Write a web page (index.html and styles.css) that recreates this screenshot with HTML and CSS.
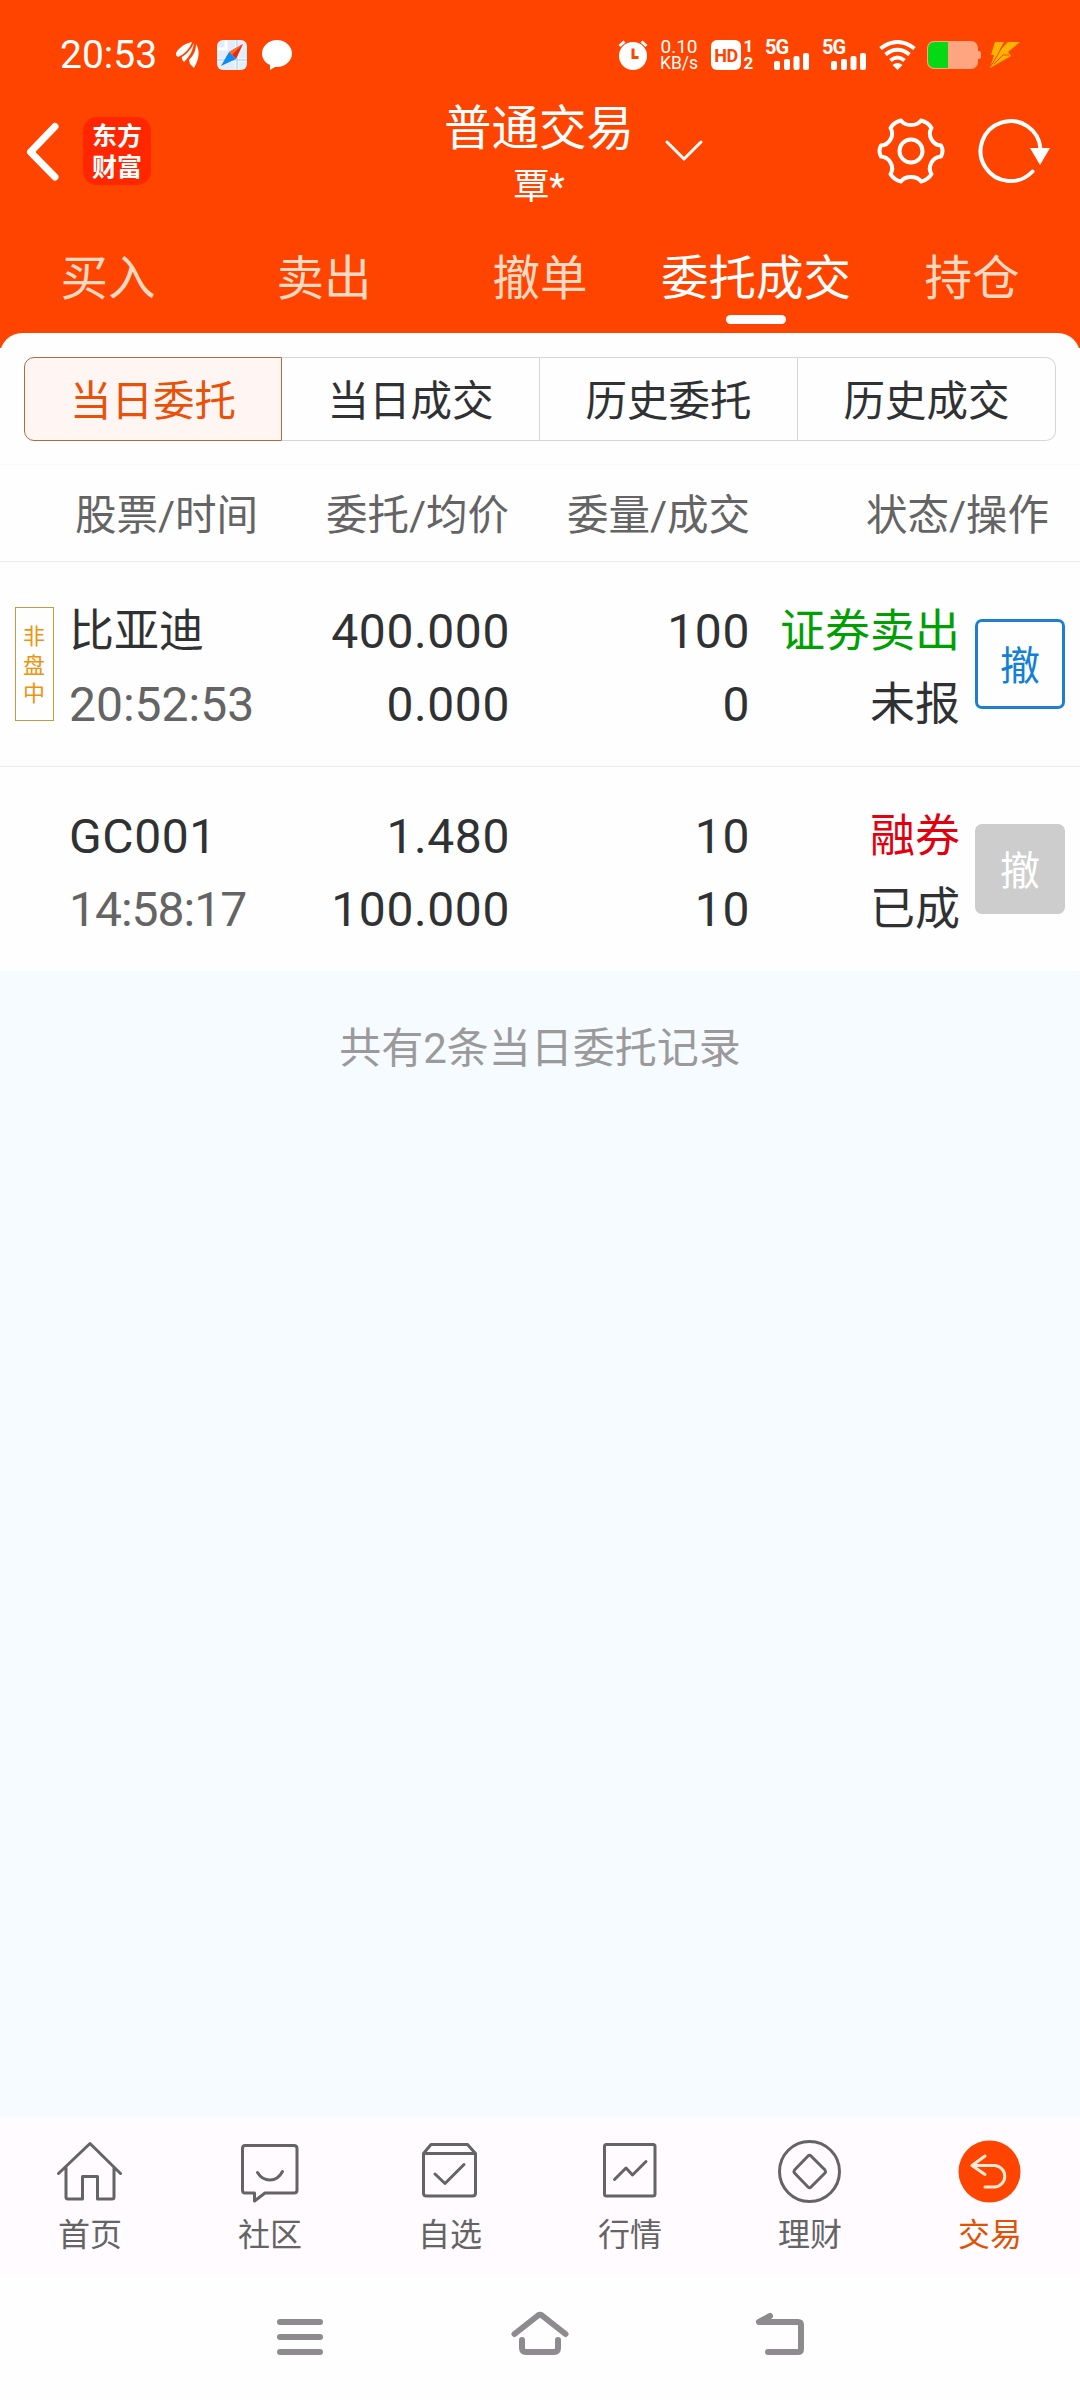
FILE: index.html
```html
<!DOCTYPE html>
<html lang="zh-CN">

<head>
    <meta charset="UTF-8">
    <meta name="viewport" content="width=device-width, initial-scale=1.0">
    <title>委托成交</title>
    <link rel="stylesheet" href="styles.css">
</head>

<body>
    <div class="header">
        <!-- 状态栏 -->
        <div class="status">
            <span class="time">20:53</span>
            <svg class="s-leaf" width="24" height="26" viewBox="0 0 24 26">
                <path d="M0 11C4 4 11 1 16 0C14 6 9 12 2 15Q-1 13 0 11Z" />
                <path d="M18 1C17 8 14 14 8 20Q5 17 6 15C12 11 15 7 18 1Z" />
                <path d="M20 2C25 10 22 19 18 26L14 22L13 18C18 13 20 8 20 2Z" />
            </svg>
            <svg class="s-compass" width="30" height="30" viewBox="0 0 30 30">
                <rect width="30" height="30" rx="6" fill="#e2ecfa" />
                <path d="M9 0V9H0M20 0V30M0 20H30" fill="none" stroke="#fff" stroke-width="3" />
                <path d="M20 0V30M0 20H30" fill="none" stroke="#b4d6f5" stroke-width="1.500" />
                <path d="M26 4L19 19L12 12Z" fill="#e8290b" />
                <path d="M26 4L12 12L15 15Z" fill="#ff6a35" />
                <path d="M4 26L12 12L19 19Z" fill="#0d8bf2" />
            </svg>
            <svg class="s-bubble" width="30" height="30" viewBox="0 0 30 30">
                <path d="M15 0C23 0 30 6 30 13.500S23 27 15 27L13 27L8 30V25C3 23 0 18 0 13.500C0 6 7 0 15 0Z" />
            </svg>

            <svg class="s-alarm" width="30" height="30" viewBox="0 0 30 30">
                <circle cx="15" cy="16" r="14" />
                <path d="M1.500 6L6.500 1.500M28.500 6L23.500 1.500" stroke="#fff" stroke-width="3" />
                <path d="M15 8.500V17.500H20.500" fill="none" stroke="#ff4400" stroke-width="3" />
            </svg>
            <div class="speed"><span>0.10</span><span>KB/s</span></div>
            <div class="hd">HD</div>
            <div class="sim"><span>1</span><span>2</span></div>
            <div class="signal">
                <span>5G</span>
                <svg width="36" height="18" viewBox="0 0 36 18">
                    <rect x="0" y="9" width="6" height="9" rx="2" />
                    <rect x="10" y="7" width="6" height="11" rx="2" />
                    <rect x="19.500" y="4" width="6" height="14" rx="2" />
                    <rect x="29" y="1" width="6" height="17" rx="2" />
                </svg>
            </div>
            <div class="signal">
                <span>5G</span>
                <svg width="36" height="18" viewBox="0 0 36 18">
                    <rect x="0" y="9" width="6" height="9" rx="2" />
                    <rect x="10" y="7" width="6" height="11" rx="2" />
                    <rect x="19.500" y="4" width="6" height="14" rx="2" />
                    <rect x="29" y="1" width="6" height="17" rx="2" />
                </svg>
            </div>
            <svg class="s-wifi" width="37" height="30" viewBox="0 0 37 30">
                <path d="M1.500 8.500Q18.500 -4.500 35.500 8.500M6.500 14.500Q18.500 5 30.500 14.500M11.500 20.500Q18.500 14.500 25.500 20.500" fill="none" stroke="#fff" stroke-width="4" />
                <path d="M13.500 25Q18.500 21 23.500 25L18.500 30Z" />
            </svg>
            <svg class="s-battery" width="54" height="28" viewBox="0 0 54 28">
                <path d="M50 10H52Q54 10 54 12V16Q54 18 52 18H50Z" fill="#ffa57f" />
                <rect width="51" height="28" rx="7" fill="#ffa57f" />
                <path d="M21 1V27H8Q1 27 1 20V8Q1 1 8 1Z" fill="#05d815" />
            </svg>
            <svg class="s-bolt" width="30" height="26" viewBox="0 0 30 26">
                <path d="M5 0H14L9 9L18 0H30L18 10L21 14L0 26L4 13H1Z" fill="#ffb400" />
                <path d="M15 0L7 14L1 24M19 13H13L4 22" fill="none" stroke="#ff4400" stroke-width="1" />
            </svg>
        </div>

        <!-- 标题栏 -->
        <div class="bar">
            <div class="bar-left">
                <svg class="back" width="36" height="60" viewBox="0 0 36 60">
                    <path d="M30 5.500L5.500 31L30 56" fill="none" stroke="#fff" stroke-width="7" stroke-linecap="round" stroke-linejoin="round" />
                </svg>
                <div class="logo"><span>东方</span><span>财富</span></div>
            </div>
            <div class="title">
                <h1>普通交易</h1>
                <p>覃*</p>
            </div>
            <div class="bar-right">
                <svg class="down" width="38" height="22" viewBox="0 0 38 22">
                    <path d="M2 2L19 19L36 2" fill="none" stroke="#fff" stroke-width="3" stroke-linecap="round" />
                </svg>
                <svg class="gear" width="72" height="72" viewBox="0 0 72 72">
                    <path d="M26 5.500C30 11.500 42 11.500 46 5.500Q53 7 56.500 13C52 20 57.500 30 66 30.500Q69 36 66 41.500C57.500 42 52 52 56.500 59Q53 65 46 66.500C42 60.500 30 60.500 26 66.500Q19 65 15.500 59C20 52 14.500 42 6 41.500Q3 36 6 30.500C14.500 30 20 20 15.500 13Q19 7 26 5.500Z" fill="none" stroke="#fff" stroke-width="4" stroke-linejoin="round" />
                    <circle cx="36" cy="36" r="11.500" fill="none" stroke="#fff" stroke-width="4" />
                </svg>
                <svg class="refresh" width="76" height="72" viewBox="0 0 76 72">
                    <path d="M65.500 34A30 30 0 1 0 57.500 56.500" fill="none" stroke="#fff" stroke-width="4" stroke-linecap="round" />
                    <path d="M55 33H75L65 50Z" />
                </svg>
            </div>
        </div>

        <ul class="tabs">
            <li>买入</li>
            <li>卖出</li>
            <li>撤单</li>
            <li class="on">委托成交</li>
            <li>持仓</li>
        </ul>
    </div>

    <div class="card">
        <ul class="seg">
            <li class="on">当日委托</li>
            <li>当日成交</li>
            <li>历史委托</li>
            <li>历史成交</li>
        </ul>
        <div class="thead">
            <span>股票/时间</span>
            <span>委托/均价</span>
            <span>委量/成交</span>
            <span>状态/操作</span>
        </div>
        <div class="row">
            <div class="mark"><span class="tag">非盘中</span></div>
            <div class="cell name"><b>比亚迪</b><i>20:52:53</i></div>
            <div class="cell"><b class="num">400.000</b><b class="num">0.000</b></div>
            <div class="cell"><b class="num">100</b><b class="num">0</b></div>
            <div class="cell"><b class="sell">证券卖出</b><b>未报</b></div>
            <a href="javascript:;" class="cancel">撤</a>
        </div>
        <div class="row">
            <div class="mark"></div>
            <div class="cell name"><b class="num">GC001</b><i class="tight">14:58:17</i></div>
            <div class="cell"><b class="num">1.480</b><b class="num">100.000</b></div>
            <div class="cell"><b class="num">10</b><b class="num">10</b></div>
            <div class="cell"><b class="lend">融券</b><b>已成</b></div>
            <a href="javascript:;" class="cancel off">撤</a>
        </div>
    </div>

    <div class="empty">共有2条当日委托记录</div>

    <!-- 底部导航 -->
    <ul class="menu">
        <li>
            <svg width="72" height="72" viewBox="0 0 72 72">
                <path d="M4.500 38.500L36 8.500L66.500 38.500M12 32V62Q12 64 14 64H28.500V41.500H43.500V64H58Q60 64 60 62V32" />
            </svg>
            <span>首页</span>
        </li>
        <li>
            <svg width="72" height="72" viewBox="0 0 72 72">
                <path d="M11 10.500H60Q63 10.500 63 13.500V55Q63 58 60 58H31L20.500 66V58H11Q8.500 58 8.500 55V13.500Q8.500 10.500 11 10.500Z" />
                <path d="M23.500 37.500Q28 45 36 45T48.500 36.500" />
            </svg>
            <span>社区</span>
        </li>
        <li>
            <svg width="72" height="72" viewBox="0 0 72 72">
                <path d="M9.500 18.500H61.500V58Q61.500 61 58.500 61H12.500Q9.500 61 9.500 58V18.500L17 9.500H53.500L61.500 18.500" />
                <path d="M21 39L31 48.500L50 29.500" />
            </svg>
            <span>自选</span>
        </li>
        <li>
            <svg width="72" height="72" viewBox="0 0 72 72">
                <rect x="10.500" y="9.500" width="50.500" height="51.500" rx="2" />
                <path d="M20.500 44.500L32 33L38.500 40L52 26.500" />
            </svg>
            <span>行情</span>
        </li>
        <li>
            <svg width="72" height="72" viewBox="0 0 72 72">
                <circle cx="35.500" cy="36.500" r="30" />
                <path d="M34 21Q35.500 19.500 37 21L51 35Q52 36.500 51 38L37 52Q35.500 53.500 34 52L20.500 38Q19.500 36.500 20.500 35Z" />
            </svg>
            <span>理财</span>
        </li>
        <li class="on">
            <svg width="72" height="72" viewBox="0 0 72 72">
                <circle cx="35.500" cy="36.500" r="31" fill="#ff4400" stroke="none" />
                <path d="M31 21L18 30.500L31 39.500M18 30.500H41A10.800 10.800 0 0 1 41 52H31" stroke="#ffead6" />
            </svg>
            <span>交易</span>
        </li>
    </ul>

    <!-- 系统按键 -->
    <div class="sys">
        <svg width="60" height="48" viewBox="0 0 60 48">
            <path d="M10 12H50M10 27H50M10 42H50" />
        </svg>
        <svg width="60" height="48" viewBox="0 0 60 48">
            <path d="M4.500 24L28 5.500Q30 4 32 5.500L55.500 24M12 30V38Q12 42 16 42H44Q48 42 48 38V30" />
        </svg>
        <svg width="60" height="48" viewBox="0 0 60 48">
            <path d="M20 6L9 12H48Q51 12 51 15V39Q51 42 48 42H18" />
        </svg>
    </div>
</body>

</html>
```
FILE: styles.css
```css
*{
    margin: 0;padding: 0;
    box-sizing: border-box;
}
body{
    width: 1080px;
    height: 2400px;
    display: flex;
    flex-direction: column;
    background-color: #fff;
    font-family: Roboto, "Noto Sans CJK SC", sans-serif;
    color: #303133;
    overflow: hidden;
}
ul{
    list-style: none;
}
a{
    text-decoration: none;
}
b, i, h1{
    font-weight: normal;
    font-style: normal;
}
svg{
    flex: none;
    fill: #fff;
}

/* 头部 */
.header{
    height: 348px;
    flex: none;
    background-color: #ff4400;
    color: #fff;
}
.status{
    height: 97px;
    padding: 12px 0 0 60px;
    display: flex;
    align-items: center;
}
.time{
    width: 116px;
    font-size: 39px;
}
.s-compass{
    margin-left: 17px;
}
.s-bubble{
    margin-left: 15px;
}
.s-alarm{
    margin-left: 326px;
}
.speed{
    width: 38px;
    margin-left: 12px;
    display: flex;
    flex-direction: column;
    align-items: center;
    font-size: 17.5px;
    line-height: 17px;
}
.speed span:first-child{
    font-size: 19px;
}
.hd{
    width: 30px;
    height: 30px;
    margin-left: 13px;
    border-radius: 6px;
    background-color: #fff;
    color: #ff4400;
    font-size: 18px;
    font-weight: bold;
    line-height: 31px;
    text-align: center;
    letter-spacing: -0.5px;
}
.sim{
    width: 11px;
    margin-left: 2px;
    display: flex;
    flex-direction: column;
    text-align: center;
    font-size: 17px;
    font-weight: bold;
    line-height: 17px;
}
.signal{
    width: 45px;
    height: 30px;
    margin-left: 11px;
    display: flex;
    flex-direction: column;
    align-items: flex-end;
}
.signal span{
    width: 100%;
    height: 12px;
    font-size: 20px;
    font-weight: bold;
    line-height: 15px;
    letter-spacing: -1px;
}
.signal + .signal{
    margin-left: 12px;
}
.s-wifi{
    margin-left: 12px;
}
.s-battery{
    margin-left: 11px;
}
.s-bolt{
    margin-left: 9px;
}
.bar{
    height: 116px;
    display: grid;
    grid-template-columns: 1fr 200px 1fr;
}
.bar-left, .bar-right{
    display: flex;
    align-items: center;
    padding-bottom: 8px;
}
.back{
    margin-left: 25px;
}
.logo{
    width: 68px;
    height: 68px;
    margin-left: 22px;
    padding-top: 4px;
    border-radius: 14px;
    background-color: #ff2600;
    display: flex;
    flex-direction: column;
    align-items: center;
    font-size: 25px;
    font-weight: bold;
    line-height: 31px;
}
.title{
    padding-right: 2px;
    text-align: center;
}
.title h1{
    font-size: 47.5px;
    line-height: 65px;
}
.title p{
    font-size: 36px;
    line-height: 50px;
}
.down{
    margin-left: 25px;
}
.gear{
    margin-left: 172px;
}
.refresh{
    margin-left: 28px;
}
.tabs{
    display: grid;
    grid-template-columns: repeat(5, 1fr);
}
.tabs li{
    position: relative;
    height: 135px;
    font-size: 47.5px;
    line-height: 133px;
    text-align: center;
    color: #ffd9c2;
}
.tabs .on{
    color: #fff;
}
.tabs .on::after{
    content: "";
    position: absolute;
    left: 78px;
    bottom: 24px;
    width: 60px;
    height: 9px;
    border-radius: 5px;
    background-color: #fff;
}

/* 委托列表 */
.card{
    margin-top: -15px;
    border-radius: 22px 22px 0 0;
    background-color: #fefefe;
    flex: none;
}
.seg{
    margin: 24px 24px 0;
    display: grid;
    grid-template-columns: repeat(4, 1fr);
}
.seg li{
    height: 84px;
    border: 1px solid #d6d6da;
    border-left-width: 0;
    font-size: 41.5px;
    line-height: 88px;
    text-align: center;
}
.seg li:first-child{
    border-left-width: 1px;
    border-radius: 10px 0 0 10px;
}
.seg li:last-child{
    border-radius: 0 10px 10px 0;
}
.seg .on{
    border-color: #b5693f;
    background-color: #fff6f4;
    color: #ea5108;
}
.thead{
    height: 98px;
    margin-top: 23px;
    display: grid;
    grid-template-columns: 258px 251px 241px 299px;
    border-top: 1px solid #f8f8f8;
    border-bottom: 1px solid #ececec;
    font-size: 41.5px;
    line-height: 102px;
    text-align: right;
    color: #646464;
}
.row{
    height: 204px;
    display: grid;
    grid-template-columns: 69px 201px 240px 240px 210px 90px;
    align-items: center;
}
.row + .row{
    height: 205px;
    border-top: 1px solid #ececec;
}
.mark{
    padding-left: 15px;
}
.tag{
    width: 39px;
    height: 114px;
    padding: 15px 7px 0;
    display: block;
    border: 1px solid #c79a3c;
    font-size: 22px;
    line-height: 28.5px;
    color: #f0930c;
}
.cell{
    padding-top: 8px;
    display: flex;
    flex-direction: column;
    align-items: flex-end;
    font-size: 45px;
    line-height: 73px;
    white-space: nowrap;
}
.name{
    align-items: flex-start;
}
.num, .name i{
    font-size: 48px;
}
.num{
    letter-spacing: 0.6px;
}
.name i{
    color: #646464;
}
.name .tight{
    letter-spacing: -1px;
}
.sell{
    color: #00a003;
}
.lend{
    color: #e2000f;
}
.cancel{
    width: 90px;
    height: 90px;
    margin-left: 15px;
    border: 3px solid #1e7fce;
    border-radius: 7px;
    font-size: 40px;
    line-height: 89px;
    text-align: center;
    color: #1280d8;
}
.off{
    border-color: #cdcdcd;
    background-color: #cdcdcd;
    color: #fff;
}
.empty{
    flex: 1;
    padding-top: 48px;
    background-color: #f5fbff;
    font-size: 42px;
    line-height: 60px;
    text-align: center;
    color: #9b999a;
}

/* 底部 */
.menu{
    height: 156px;
    flex: none;
    display: grid;
    grid-template-columns: repeat(6, 1fr);
    background-color: #fffbff;
}
.menu li{
    padding-top: 17px;
    display: flex;
    flex-direction: column;
    align-items: center;
    font-size: 32px;
    line-height: 57px;
    color: #646464;
}
.menu svg{
    fill: none;
    stroke: #646464;
    stroke-width: 3;
    stroke-linecap: round;
    stroke-linejoin: round;
}
.menu .on{
    color: #e05206;
}
.sys{
    height: 126px;
    flex: none;
    padding: 36px 180px 0;
    display: grid;
    grid-template-columns: repeat(3, 1fr);
    justify-items: center;
    background-color: #fefefe;
}
.sys svg{
    fill: none;
    stroke: #8d8b8e;
    stroke-width: 6;
    stroke-linecap: round;
    stroke-linejoin: round;
}
```
